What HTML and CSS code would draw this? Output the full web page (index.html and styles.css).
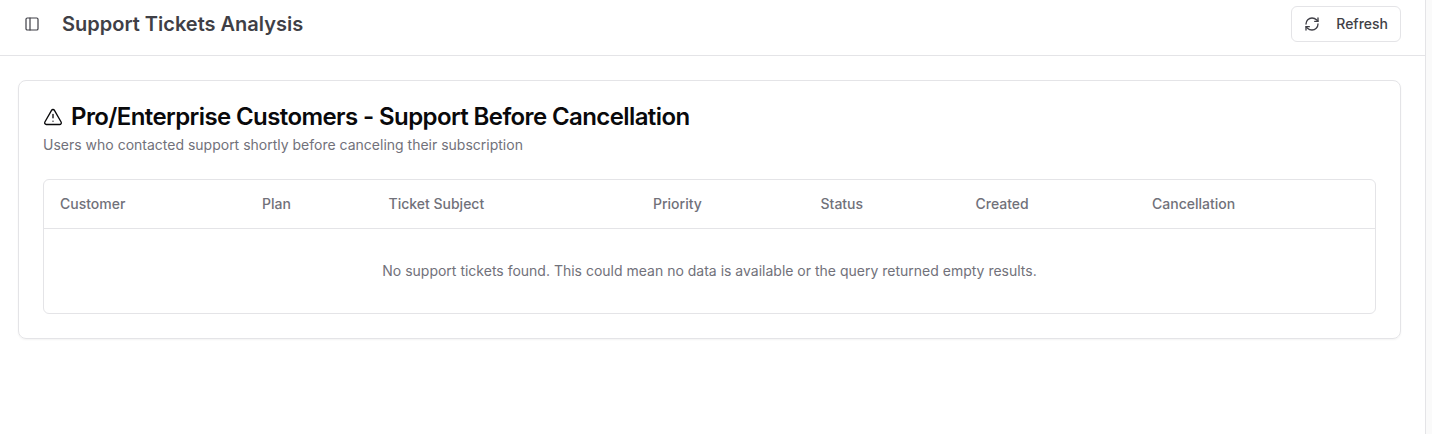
FILE: index.html
```html
<!DOCTYPE html>
<html lang="en">
<head>
<meta charset="utf-8">
<title>Support Tickets Analysis</title>
<link rel="stylesheet" href="styles.css">
</head>
<body>
<div class="page">
  <header class="topbar">
    <svg class="icon panel-icon" viewBox="0 0 24 24"><rect width="18" height="18" x="3" y="3" rx="2"/><path d="M9 3v18"/></svg>
    <h1 class="page-title">Support Tickets Analysis</h1>
    <button class="refresh">
      <svg class="icon" viewBox="0 0 24 24"><path d="M3 12a9 9 0 0 1 9-9 9.75 9.75 0 0 1 6.74 2.74L21 8"/><path d="M21 3v5h-5"/><path d="M21 12a9 9 0 0 1-9 9 9.75 9.75 0 0 1-6.74-2.74L3 16"/><path d="M8 16H3v5"/></svg>
      <span>Refresh</span>
    </button>
  </header>
  <main class="content">
    <section class="card">
      <h2 class="card-title">
        <svg class="icon warn-icon" viewBox="0 0 24 24"><path d="m21.73 18-8-14a2 2 0 0 0-3.48 0l-8 14A2 2 0 0 0 4 21h16a2 2 0 0 0 1.73-3"/><path d="M12 9v4"/><path d="M12 17h.01"/></svg>
        <span>Pro/Enterprise Customers - Support Before Cancellation</span>
      </h2>
      <p class="card-desc">Users who contacted support shortly before canceling their subscription</p>
      <div class="table">
        <div class="thead">
          <span>Customer</span><span>Plan</span><span>Ticket Subject</span><span>Priority</span><span>Status</span><span>Created</span><span>Cancellation</span>
        </div>
        <div class="empty"><span>No support tickets found. This could mean no data is available or the query returned empty results.</span></div>
      </div>
    </section>
  </main>
</div>
</body>
</html>
```

FILE: styles.css
```css
* { box-sizing: border-box; }
body { margin: 0; background: #fafafa; font-family: Inter, sans-serif; color: #09090b; font-size: 14px; line-height: 20px; }
h1, h2, p { margin: 0; }
.page { width: 1426px; height: 434px; background: #fff; border-right: 1px solid #e4e4e7; overflow: hidden; }
.icon { width: 16px; height: 16px; flex: none; fill: none; stroke: currentColor; stroke-width: 2; stroke-linecap: round; stroke-linejoin: round; }
.topbar { display: flex; align-items: center; height: 56px; padding: 0 24px 8px; border-bottom: 1px solid #e4e4e7; color: #3f3f46; }
.panel-icon { stroke-width: 1.8; }
.page-title { margin-left: 22px; font-size: 20px; line-height: 28px; font-weight: 600; }
.refresh { display: flex; align-items: center; gap: 16px; height: 36px; margin-left: auto; padding: 0 12px; border: 1px solid #e4e4e7; border-radius: 6px; background: #fff; color: #3f3f46; font: 500 14px/20px Inter, sans-serif; }
.content { padding: 24px 24px 0 18px; }
.card { height: 259px; padding: 24px; border: 1px solid #e4e4e7; border-radius: 8px; box-shadow: 0 1px 2px rgba(0,0,0,.05); }
.card-title { display: flex; align-items: center; gap: 8px; font-size: 24px; line-height: 24px; font-weight: 600; letter-spacing: -0.6px; }
.warn-icon { width: 20px; height: 20px; stroke-width: 1.6; }
.card-desc { margin-top: 6px; color: #71717a; }
.table { margin-top: 24px; height: 135px; border: 1px solid #e4e4e7; border-radius: 6px; color: #71717a; }
.thead { display: grid; grid-template-columns: 202px 126.5px 264.5px 167.5px 155px 176.5px 1fr; align-items: center; height: 49px; padding-left: 16px; border-bottom: 1px solid #e4e4e7; font-weight: 500; }
.empty { display: flex; align-items: center; justify-content: center; height: 84px; }
```
